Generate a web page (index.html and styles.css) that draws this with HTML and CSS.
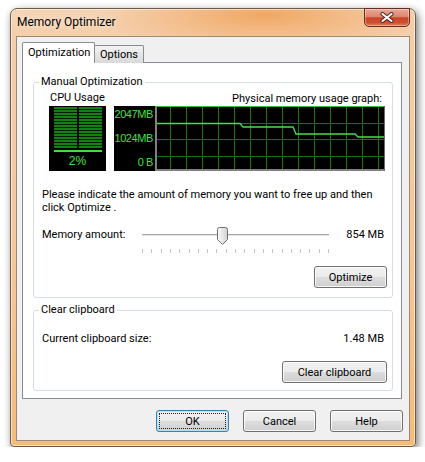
FILE: index.html
```html
<!DOCTYPE html>
<html>
<head>
<meta charset="utf-8">
<title>Memory Optimizer</title>
<link rel="stylesheet" href="styles.css">
</head>
<body>
<div class="window">
  <div class="titlebar">
    <span class="title">Memory Optimizer</span>
    <div class="close">
      <svg width="14" height="11" viewBox="0 0 14 11"><path d="M2.5 2 L11.5 9 M11.5 2 L2.5 9" stroke="#4a2018" stroke-width="4" stroke-linecap="round"/><path d="M2.5 2 L11.5 9 M11.5 2 L2.5 9" stroke="#ffffff" stroke-width="2.2" stroke-linecap="round"/></svg>
    </div>
  </div>
  <div class="client">
    <div class="tabs">
      <div class="tab active">Optimization</div>
      <div class="tab">Options</div>
    </div>
    <div class="panel">
      <fieldset class="group manual">
        <legend>Manual Optimization</legend>
        <div class="meters">
          <div class="cpu-col">
            <div class="cap cpu-cap">CPU Usage</div>
            <div class="cpu-meter">
              <div class="cpu-bars"></div>
              <div class="cpu-level"></div>
              <div class="cpu-value">2%</div>
            </div>
          </div>
          <div class="mem-col">
            <div class="cap mem-cap">Physical memory usage graph:</div>
            <div class="mem-graph">
              <div class="mem-scale"><span>2047MB</span><span>1024MB</span><span>0 B</span></div>
              <svg class="mem-grid" width="230" height="65" viewBox="0 0 230 65">
                <rect width="230" height="65" fill="#000"/>
                <g stroke="#0d7a0d" stroke-width="1">
                  <path d="M15.5 0V63M31.5 0V63M47.5 0V63M63.5 0V63M79.5 0V63M95.5 0V63M111.5 0V63M127.5 0V63M143.5 0V63M159.5 0V63M175.5 0V63M191.5 0V63M207.5 0V63M223.5 0V63"/>
                  <path d="M0 17.5H230M0 33.5H230M0 50.5H230"/>
                </g>
                <path d="M0 0.5H230" stroke="#2fc42f"/>
                <rect x="0" y="0" width="2" height="65" fill="#808080"/>
                <rect x="0" y="63" width="230" height="2" fill="#808080"/>
                <rect x="229" y="0" width="1" height="65" fill="#6a6a6a"/>
                <polyline points="2,17.5 85,17.5 88,21 138,21 141,28 200,28 203,31 229,31" fill="none" stroke="#48e048" stroke-width="1.3"/>
              </svg>
            </div>
          </div>
        </div>
        <p class="desc">Please indicate the amount of memory you want to free up and then<br>click Optimize .</p>
        <div class="amount">
          <span class="amount-label">Memory amount:</span>
          <div class="slider">
            <div class="track">
              <svg class="thumb" width="11" height="18" viewBox="0 0 11 18">
                <defs><linearGradient id="tg" x1="0" y1="0" x2="1" y2="0"><stop offset="0" stop-color="#fbfbfb"/><stop offset="1" stop-color="#d2d2d2"/></linearGradient></defs>
                <path d="M0.5 2.5Q0.5 0.5 2.5 0.5H8.5Q10.5 0.5 10.5 2.5V12.5L5.5 17.5L0.5 12.5Z" fill="url(#tg)" stroke="#707070"/>
              </svg>
            </div>
            <div class="ticks"></div>
          </div>
          <span class="amount-value">854 MB</span>
        </div>
        <div class="actions"><button class="btn">Optimize</button></div>
      </fieldset>
      <fieldset class="group clip">
        <legend>Clear clipboard</legend>
        <div class="clip-row"><span>Current clipboard size:</span><span>1.48 MB</span></div>
        <div class="actions"><button class="btn wide">Clear clipboard</button></div>
      </fieldset>
    </div>
    <div class="dlg-buttons">
      <button class="btn default">OK</button>
      <button class="btn">Cancel</button>
      <button class="btn">Help</button>
    </div>
  </div>
</div>
</body>
</html>
```
FILE: styles.css
```css
* { box-sizing: border-box; }
html, body { margin: 0; }
body {
  background: #ffffff;
  padding: 8px 0 0 10px;
  font-family: Roboto, "Liberation Sans", sans-serif;
  font-size: 11px;
  color: #000;
}
.window {
  width: 406px;
  height: 439px;
  border: 1px solid #6e5a45;
  border-radius: 7px 7px 4px 4px;
  padding: 0 5px 5px;
  display: flex;
  flex-direction: column;
  background:
    radial-gradient(ellipse 170px 34px at 63% 6px, rgba(240,160,85,.85), rgba(240,160,85,0) 100%),
    linear-gradient(to bottom, #f5d4b6 0, #f5cda8 30px, #f6c696 60%, #f6bb76 100%);
  box-shadow: 2px 3px 9px rgba(0,0,0,.55), inset 0 0 0 1px rgba(255,255,255,.55);
}
.titlebar {
  height: 27px;
  display: flex;
  align-items: flex-start;
  flex-shrink: 0;
}
.title {
  padding-left: 1px;
  line-height: 27px;
  font-size: 12px;
  text-shadow: 0 0 6px rgba(255,255,255,.9);
}
.close {
  width: 46px;
  height: 19px;
  margin-left: auto;
  margin-top: -1px;
  border: 1px solid #6d2c1e;
  border-radius: 0 0 5px 5px;
  background: linear-gradient(#e9a99a 0%, #dd8570 45%, #c8452a 52%, #d0502f 80%, #e0805f 100%);
  box-shadow: inset 0 0 0 1px rgba(255,255,255,.35);
  display: flex;
  align-items: center;
  justify-content: center;
}
.client {
  flex: 1;
  border: 1px solid #9c8a73;
  background: #f0f0f0;
  padding: 5px 7px 0 5px;
  display: flex;
  flex-direction: column;
}
.tabs {
  display: flex;
  align-items: flex-end;
  height: 21px;
  margin-bottom: -1px;
  position: relative;
  z-index: 1;
}
.tab {
  height: 18px;
  padding: 0 5px;
  margin-left: -1px;
  border: 1px solid #898c95;
  border-bottom: none;
  border-radius: 2px 2px 0 0;
  background: linear-gradient(#f3f3f3, #e6e6e6 50%, #d9d9d9);
  line-height: 17px;
}
.tab.active {
  height: 21px;
  width: 73px;
  margin-left: 0;
  text-align: center;
  line-height: 20px;
  background: #fff;
  position: relative;
  z-index: 2;
}
.panel {
  height: 337px;
  border: 1px solid #898c95;
  background: #fff;
  padding: 12px 8px 0 10px;
  flex-shrink: 0;
}
.group {
  margin: 0;
  padding: 0 8px;
  min-width: 0;
  border: 1px solid #d5dfe5;
  border-radius: 3px;
}
.group legend {
  padding: 0 2px;
  margin-left: -3px;
  line-height: 14px;
  font-size: 11px;
}
.manual { padding-bottom: 9px; }
.meters {
  display: flex;
  margin: 0 -1px 0 7px;
}
.cpu-col { width: 57px; }
.mem-col { flex: 1; margin-left: 8px; }
.cap {
  height: 17px;
  line-height: 14px;
  white-space: nowrap;
}
.cpu-cap { padding: 2px 0 0 1px; }
.mem-cap { padding: 3px 3px 0 0; text-align: right; }
.cpu-meter {
  height: 65px;
  background: #000;
  display: flex;
  flex-direction: column;
  align-items: center;
  padding-top: 1px;
}
.cpu-bars {
  width: 48px;
  height: 41px;
  background:
    linear-gradient(to right, transparent 23px, #000 23px 25px, transparent 25px),
    repeating-linear-gradient(to bottom, #138013 0 2px, #031a03 2px 3px);
}
.cpu-level {
  width: 48px;
  height: 2px;
  margin-top: 2px;
  background: #3ee03e;
}
.cpu-value {
  margin-top: 2px;
  line-height: 15px;
  font-family: "Liberation Sans", sans-serif;
  font-size: 12px;
  color: #42e042;
}
.mem-graph {
  display: flex;
  height: 65px;
  background: #000;
}
.mem-scale {
  width: 41px;
  display: flex;
  flex-direction: column;
  justify-content: space-between;
  align-items: flex-end;
  padding: 2px 2px 2px 0;
  font-family: "Liberation Sans", sans-serif;
  font-size: 11px;
  line-height: 13px;
  letter-spacing: -0.4px;
  color: #3ee03e;
}
.mem-grid { display: block; }
.desc {
  margin: 17px 0 0;
  line-height: 13px;
}
.amount {
  display: flex;
  align-items: flex-start;
  margin-top: 10px;
}
.amount-label { width: 100px; line-height: 22px; }
.slider { width: 187px; }
.track {
  height: 22px;
  position: relative;
  background: linear-gradient(to bottom, transparent 10px, #a8a8a8 10px 11px, #e4e4e4 11px 12px, transparent 12px);
}
.thumb {
  position: absolute;
  left: 75px;
  top: 3px;
}
.ticks {
  height: 4px;
  margin-top: 3px;
  background: repeating-linear-gradient(to right, #c4c4c4 0 1px, transparent 1px 9.3px);
}
.amount-value { flex: 1; text-align: right; line-height: 22px; }
.actions {
  display: flex;
  justify-content: flex-end;
  margin: 13px -3px 0 0;
}
.clip { margin-top: 5px; padding-bottom: 7px; }
.clip-row {
  display: flex;
  justify-content: space-between;
  line-height: 14px;
  margin-top: 15px;
}
.clip .actions { margin-top: 15px; }
.btn {
  width: 73px;
  height: 22px;
  padding: 0;
  border: 1px solid #707070;
  border-radius: 3px;
  background: linear-gradient(#f2f2f2 0%, #ebebeb 50%, #dddddd 51%, #cfcfcf 100%);
  box-shadow: inset 0 0 0 1px rgba(255,255,255,.8);
  font-family: Roboto, "Liberation Sans", sans-serif;
  font-size: 11px;
  color: #000;
}
.btn.wide { width: 105px; }
.btn.default {
  border-color: #3c7fb1;
  box-shadow: inset 0 0 0 1px #a8e6fb;
  outline: 1px dotted #222;
  outline-offset: -4px;
}
.dlg-buttons {
  display: flex;
  justify-content: flex-end;
  gap: 14px;
  margin: 11px -1px 0 0;
}
```
